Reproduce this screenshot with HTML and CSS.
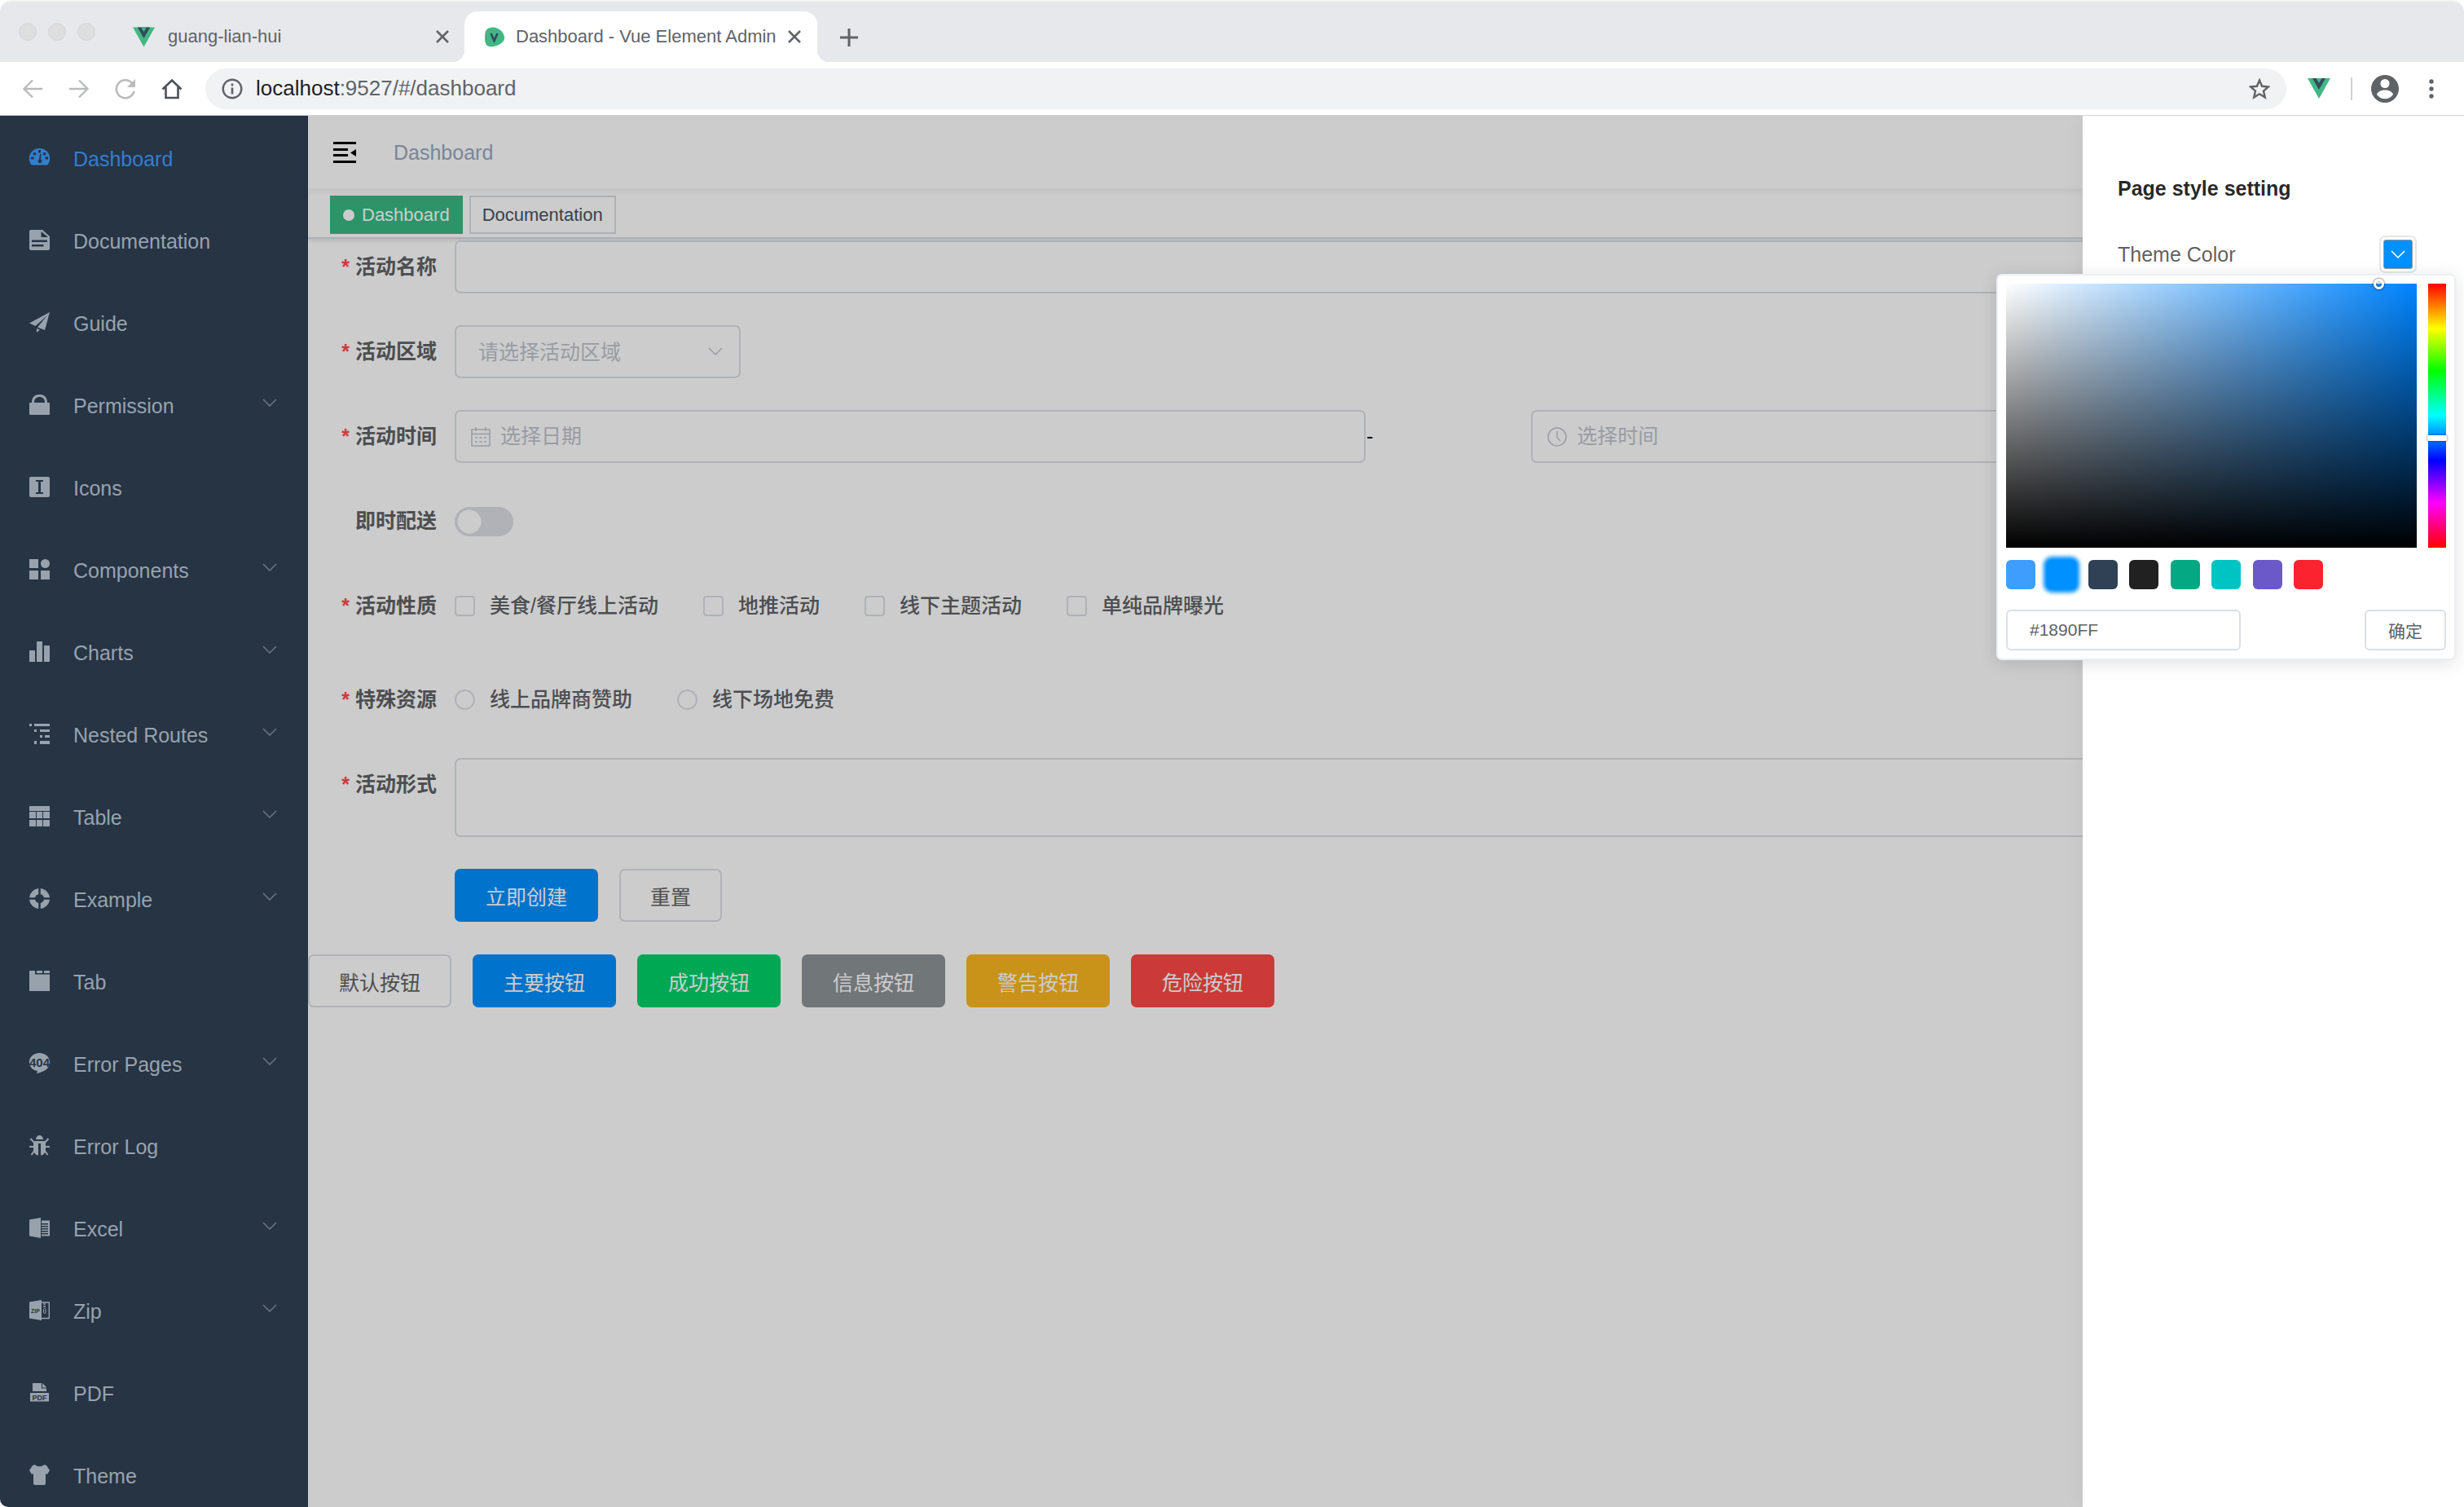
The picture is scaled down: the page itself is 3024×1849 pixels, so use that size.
FILE: index.html
```html
<!DOCTYPE html>
<html lang="zh-CN">
<head>
    <meta charset="UTF-8">
    <meta name="viewport" content="width=device-width, initial-scale=1.0">
    <title>Dashboard - Vue Element Admin</title>
    <link rel="stylesheet" href="styles.css">
</head>
<body>
    <svg class="sprite" aria-hidden="true">
        <symbol id="arrow-down" viewBox="0 0 18 10"><path d="M1 1l8 8 8-8" fill="none" stroke="currentColor" stroke-width="1.5"/></symbol>
        <symbol id="vue" viewBox="0 0 28 25"><path d="M0 0h28L14 25z" fill="#41b883"/><path d="M6 0h16l-8 14z" fill="#34495e"/><path d="M10.500 0h7L14 6z" fill="#41b883"/></symbol>
        <symbol id="close" viewBox="0 0 16 16"><path d="M1 1l14 14M15 1L1 15" fill="none" stroke="currentColor" stroke-width="2.500"/></symbol>
    </svg>

    <!-- browser bar -->
    <header class="browser">
        <div class="tab-strip">
            <div class="lights"><i></i><i></i><i></i></div>
            <div class="tab">
                <svg class="tab-icon"><use href="#vue"/></svg>
                <span class="tab-title">guang-lian-hui</span>
                <button class="tab-close" aria-label="Close tab"><svg><use href="#close"/></svg></button>
            </div>
            <div class="tab active">
                <svg class="tab-icon" viewBox="0 0 24 25"><path d="M7 1c7-2 16 4 17 11S17 23 11 24 0 24 0 14 2 2 7 1z" fill="#41b883"/><path d="M7.500 8l4 9 4-9" fill="none" stroke="#34495e" stroke-width="2.600"/></svg>
                <span class="tab-title">Dashboard - Vue Element Admin</span>
                <button class="tab-close" aria-label="Close tab"><svg><use href="#close"/></svg></button>
            </div>
            <button class="new-tab" aria-label="New tab"><svg viewBox="0 0 22 22"><path d="M11 0v22M0 11h22" stroke="currentColor" stroke-width="3"/></svg></button>
        </div>
        <div class="toolbar">
            <div class="nav-buttons">
                <button class="off" aria-label="Back"><svg viewBox="0 0 26 26"><path d="M25 13H3M13 2.500L2.500 13 13 23.500" fill="none" stroke="currentColor" stroke-width="2.400"/></svg></button>
                <button class="off" aria-label="Forward"><svg viewBox="0 0 26 26"><path d="M1 13h22M13 2.500L23.500 13 13 23.500" fill="none" stroke="currentColor" stroke-width="2.400"/></svg></button>
                <button class="off" aria-label="Reload"><svg viewBox="0 0 26 26"><path d="M21.500 6.500A11 11 0 1 0 23.500 16" fill="none" stroke="currentColor" stroke-width="2.600"/><path d="M25 1v10H15z" fill="currentColor"/></svg></button>
                <button aria-label="Home"><svg viewBox="0 0 26 26"><path d="M1.500 13.500L13 2.500l11.500 11M5.500 11v13h15V11" fill="none" stroke="currentColor" stroke-width="2.600"/></svg></button>
            </div>
            <div class="omnibox">
                <svg viewBox="0 0 26 26"><circle cx="13" cy="13" r="11.300" fill="none" stroke="#5f6368" stroke-width="2.400"/><path d="M13 11.500v8M13 6.500v3" stroke="#5f6368" stroke-width="2.600"/></svg>
                <span class="url"><b>localhost</b>:9527/#/dashboard</span>
                <button aria-label="Bookmark"><svg viewBox="0 0 26 26"><path d="M13 2.500l3.100 7.300 7.900.700-6 5.200 1.800 7.700-6.800-4.100-6.800 4.100L8 15.700l-6-5.200 7.900-.700z" fill="none" stroke="currentColor" stroke-width="2.400"/></svg></button>
            </div>
            <div class="extensions">
                <svg class="ext-vue"><use href="#vue"/></svg>
                <span class="divider"></span>
                <button class="account" aria-label="Account"><svg viewBox="0 0 34 34"><circle cx="17" cy="17" r="17" fill="#5f6368"/><circle cx="17" cy="10.500" r="5.500" fill="#fff"/><path d="M7 24c1-4 6-5.500 10-5.500S26 20 27 24c-2.500 3.500-6 5.200-10 5.200S9.500 27.500 7 24z" fill="#fff"/></svg></button>
                <button class="more" aria-label="Menu"><svg viewBox="0 0 6 24"><circle cx="3" cy="3" r="2.700"/><circle cx="3" cy="12" r="2.700"/><circle cx="3" cy="21" r="2.700"/></svg></button>
            </div>
        </div>
    </header>

    <div class="app">
        <nav class="sidebar">
            <a class="active" href="#dashboard"><svg viewBox="0 0 25 25"><path fill-rule="evenodd" d="M12.500 1A12.500 12.500 0 0 0 2 20.500q.6.900 1.500.900h18q.9 0 1.500-.900A12.500 12.500 0 0 0 12.500 1zM11 3h3v3.500h-3zM4.800 6.200h3.400v3H4.800zM16.800 6.200h3.400v3h-3.400zM2 11.500h3.500v3H2zM19.500 11.500H23v3h-3.500zM13 8h1.500l-.500 6.500a2.500 2.500 0 1 1-2 0z"/></svg><span>Dashboard</span></a>
            <a href="#documentation"><svg viewBox="0 0 25 25"><path fill-rule="evenodd" d="M2 0h14l9 8v15q0 2-2 2H2q-2 0-2-2V2q0-2 2-2zM14.500 2v7H23zM3 12.500v2.500h19v-2.500zM3 18v2.500h14.500V18z"/></svg><span>Documentation</span></a>
            <a href="#guide"><svg viewBox="0 0 25 25"><path d="M25 0L19 22l-9-3.500L22 4 7.500 17 0 13.500zM9 20l4 1.500-4 3.500z"/></svg><span>Guide</span></a>
            <a href="#permission"><svg viewBox="0 0 25 25"><path d="M1 10h2C3 3 7 0 12.500 0S22 3 22 10h2q1 0 1 1v13q0 1-1 1H1q-1 0-1-1V11q0-1 1-1zm5 0h13c0-5-3-7-6.500-7S6 5 6 10z"/></svg><span>Permission</span><svg class="arrow"><use href="#arrow-down"/></svg></a>
            <a href="#icons"><svg viewBox="0 0 25 25"><path fill-rule="evenodd" d="M2 0h21q2 0 2 2v21q0 2-2 2H2q-2 0-2-2V2q0-2 2-2zM8 4v2h3v13H8v2h9v-2h-3V6h3V4z"/></svg><span>Icons</span></a>
            <a href="#components"><svg viewBox="0 0 25 25"><path d="M0 0h11v11H0zM0 14h11v11H0zM14 14h11v11H14z"/><circle cx="19.500" cy="5.500" r="5.500"/></svg><span>Components</span><svg class="arrow"><use href="#arrow-down"/></svg></a>
            <a href="#charts"><svg viewBox="0 0 25 25"><path d="M0 11h7v14H0zM9 0h7v25H9zM18 5h7v20h-7z"/></svg><span>Charts</span><svg class="arrow"><use href="#arrow-down"/></svg></a>
            <a href="#nested"><svg viewBox="0 0 25 25"><path d="M0 0h3v3H0zM6 0h19v3H6zM6 7h3v3H6zM13 7h12v3H13zM13 14h3v3h-3zM19 14h6v3h-6zM6 21h3v4H6zM13 21h12v4H13z"/></svg><span>Nested Routes</span><svg class="arrow"><use href="#arrow-down"/></svg></a>
            <a href="#table"><svg viewBox="0 0 25 25"><path d="M0 0h25v6H0zM0 7h8v8H0zM9 7h7v8H9zM17 7h8v8h-8zM0 17h8v8H0zM9 17h7v8H9zM17 17h8v8h-8z"/></svg><span>Table</span><svg class="arrow"><use href="#arrow-down"/></svg></a>
            <a href="#example"><svg viewBox="0 0 25 25"><circle cx="12.500" cy="12.500" r="9" fill="none" stroke="currentColor" stroke-width="7"/><path d="M12.500 0v7.500M12.500 17.500V25M0 12.500h7.500M17.500 12.500H25" stroke="#304156" stroke-width="2.500"/></svg><span>Example</span><svg class="arrow"><use href="#arrow-down"/></svg></a>
            <a href="#tab"><svg viewBox="0 0 25 25"><path d="M0 0h7v4.500h18V25H0zM9 0h7v3H9zM18 0h7v3h-7z"/></svg><span>Tab</span></a>
            <a href="#error"><svg viewBox="0 0 25 25"><path d="M12.500 0C20 0 25 5 25 11c0 8-6 12-16 14l1-3C4 21 0 17 0 11 0 5 5 0 12.500 0z"/><text class="icon-text" x="12.500" y="16.500" font-size="15" text-anchor="middle">404</text></svg><span>Error Pages</span><svg class="arrow"><use href="#arrow-down"/></svg></a>
            <a href="#log"><svg viewBox="0 0 25 25"><path d="M8 5c0-3 2-5 4.500-5S17 2 17 5zM5 7h15v10c0 4-2 7-6 7.500V10h-3v14.500c-4-.500-6-3.500-6-7.500z"/><path d="M1.500 4L6 9M23.500 4L19 9M0 14h6M19 14h6M2.500 24L6 19M22.500 24L19 19" stroke="currentColor" stroke-width="2"/></svg><span>Error Log</span></a>
            <a href="#excel"><svg viewBox="0 0 25 25"><path fill-rule="evenodd" d="M0 2.500L14 0v25L0 22.500zM15 3.500h10v19H15v-2h8v-1.500h-8v-1.500h8V16h-8v-1.500h8V13h-8v-1.500h8V10h-8V8.500h8V7h-8z"/></svg><span>Excel</span><svg class="arrow"><use href="#arrow-down"/></svg></a>
            <a href="#zip"><svg viewBox="0 0 25 25"><path d="M0 2.500L15 0v25L0 22.500z"/><path d="M15 3h9.300v19.500H15" fill="none" stroke="currentColor" stroke-width="1.400"/><path d="M17 5h3M17 8h3" stroke="currentColor" stroke-width="1.500"/><rect x="17.500" y="10.500" width="2.500" height="6" rx="1" fill="none" stroke="currentColor"/><text class="icon-text" x="7.500" y="15.500" font-size="7" text-anchor="middle">ZIP</text></svg><span>Zip</span><svg class="arrow"><use href="#arrow-down"/></svg></a>
            <a href="#pdf"><svg viewBox="0 0 25 25"><path d="M4 1h12l5 5v5H4zM1 13h23v10.500H1z"/><path d="M15.500 1v6H21" fill="none" stroke="#304156" stroke-width="1.200"/><text class="icon-text" x="12.500" y="21.500" font-size="9" text-anchor="middle">PDF</text></svg><span>PDF</span></a>
            <a href="#theme"><svg viewBox="0 0 25 25"><path d="M7 0c2 3 9 3 11 0l3 1 4 6-3 5-2-1v12q0 2-2 2H7q-2 0-2-2V11l-2 1-3-5 4-6z"/></svg><span>Theme</span></a>
        </nav>

        <main class="main">
            <div class="navbar">
                <button class="hamburger" aria-label="Toggle sidebar"><svg viewBox="0 0 28 26"><path d="M0 0h28v3H0zM0 8h18v3H0zM0 15h18v3H0zM0 23h28v3H0zM28 9v9l-7-4.500z"/></svg></button>
                <span class="breadcrumb">Dashboard</span>
            </div>
            <div class="tags">
                <a class="tag active" href="#dashboard">Dashboard</a>
                <a class="tag" href="#documentation">Documentation</a>
            </div>

            <form class="form">
                <div class="row">
                    <label class="label required" for="name">活动名称</label>
                    <input class="input" id="name" type="text">
                </div>
                <div class="row">
                    <label class="label required" for="region">活动区域</label>
                    <div class="select">
                        <select id="region">
                            <option>请选择活动区域</option>
                        </select>
                        <svg><use href="#arrow-down"/></svg>
                    </div>
                </div>
                <div class="row">
                    <label class="label required" for="date">活动时间</label>
                    <div class="time-cols">
                        <div class="picker">
                            <svg viewBox="0 0 24 24"><path d="M1 3h22v20H1zM1 8.500h22M6 0v5M18 0v5M5 13h3m2.500 0h3m2.500 0h3M5 18h3m2.500 0h3m2.500 0h3" fill="none" stroke="currentColor" stroke-width="1.500"/></svg>
                            <input id="date" type="text" placeholder="选择日期">
                        </div>
                        <span class="dash">-</span>
                        <div class="picker">
                            <svg viewBox="0 0 24 24"><circle cx="12" cy="12" r="11" fill="none" stroke="currentColor" stroke-width="1.500"/><path d="M12 5v8l4 4" fill="none" stroke="currentColor" stroke-width="1.500"/></svg>
                            <input type="text" placeholder="选择时间" aria-label="选择时间">
                        </div>
                    </div>
                </div>
                <div class="row">
                    <label class="label" for="delivery">即时配送</label>
                    <input class="switch" id="delivery" type="checkbox">
                </div>
                <div class="row checks">
                    <span class="label required">活动性质</span>
                    <div class="options">
                        <label><input type="checkbox">美食/餐厅线上活动</label>
                        <label><input type="checkbox">地推活动</label>
                        <label><input type="checkbox">线下主题活动</label>
                        <label><input type="checkbox">单纯品牌曝光</label>
                    </div>
                </div>
                <div class="row">
                    <span class="label required">特殊资源</span>
                    <div class="options">
                        <label><input type="radio" name="resource">线上品牌商赞助</label>
                        <label><input type="radio" name="resource">线下场地免费</label>
                    </div>
                </div>
                <div class="row">
                    <label class="label required" for="desc">活动形式</label>
                    <textarea class="input" id="desc"></textarea>
                </div>
                <div class="row actions">
                    <button class="btn primary" type="button">立即创建</button>
                    <button class="btn" type="button">重置</button>
                </div>
            </form>

            <div class="buttons">
                <button class="btn">默认按钮</button>
                <button class="btn primary">主要按钮</button>
                <button class="btn success">成功按钮</button>
                <button class="btn info">信息按钮</button>
                <button class="btn warning">警告按钮</button>
                <button class="btn danger">危险按钮</button>
            </div>
        </main>

        <div class="mask"></div>

        <aside class="drawer">
            <h3>Page style setting</h3>
            <div class="drawer-item">
                <span>Theme Color</span>
                <button class="color-trigger" aria-label="Theme Color"><span><svg><use href="#arrow-down"/></svg></span></button>
            </div>
            <div class="color-dropdown">
                <div class="color-main">
                    <div class="sv-panel"><i></i></div>
                    <input class="hue" type="range" min="0" max="360" value="211" aria-label="Hue">
                </div>
                <div class="swatches">
                    <button style="background: #3e9efe" aria-label="#409EFF"></button>
                    <button class="selected" style="background: #0090ff" aria-label="#1890FF"></button>
                    <button style="background: #304156" aria-label="#304156"></button>
                    <button style="background: #212121" aria-label="#212121"></button>
                    <button style="background: #04a984" aria-label="#11A983"></button>
                    <button style="background: #00c4c3" aria-label="#13C2C2"></button>
                    <button style="background: #6b59c9" aria-label="#6959CD"></button>
                    <button style="background: #fb2330" aria-label="#F5222D"></button>
                </div>
                <div class="color-footer">
                    <input type="text" value="#1890FF" aria-label="Color value">
                    <button>确定</button>
                </div>
            </div>
        </aside>
    </div>
</body>
</html>
```

FILE: styles.css
```css
* {
    box-sizing: border-box;
}
body {
    display: flex;
    flex-direction: column;
    height: 100vh;
    margin: 0;
    overflow: hidden;
    background: white;
    color: #606266;
    font-family: "Liberation Sans", "Noto Sans CJK SC", Arial, sans-serif;
    font-size: 25px;
}
button, input, select, textarea {
    margin: 0;
    font-family: inherit;
    font-size: inherit;
    color: inherit;
}
button {
    padding: 0;
    border: none;
    background: none;
    cursor: pointer;
}
svg {
    display: block;
    flex-shrink: 0;
    fill: currentColor;
}
a {
    color: inherit;
    text-decoration: none;
}
.sprite {
    position: absolute;
    width: 0;
    height: 0;
}

/* browser bar */
.tab-strip {
    display: flex;
    align-items: center;
    height: 76px;
    padding-left: 23px;
    border-top: 2px solid #f3f4f5;
    border-radius: 14px 14px 0 0;
    background: #e7e8eb;
    color: #5f6368;
}
.lights {
    display: flex;
    gap: 14px;
    margin-right: 20px;
}
.lights i {
    width: 22px;
    height: 22px;
    border: 1px solid #d5d6d6;
    border-radius: 50%;
    background: #dddedd;
}
.tab {
    position: relative;
    display: flex;
    align-items: center;
    align-self: flex-end;
    gap: 16px;
    width: 433px;
    height: 62px;
    padding: 0 19px 0 26px;
    font-size: 22px;
}
.tab.active {
    gap: 14px;
    padding: 0 22px 0 25px;
    border-radius: 16px 16px 0 0;
    background: white;
}
.tab.active::before, .tab.active::after {
    content: "";
    position: absolute;
    bottom: 0;
    width: 14px;
    height: 14px;
}
.tab.active::before {
    left: -14px;
    background: radial-gradient(circle at 0 0, transparent 14px, white 14px);
}
.tab.active::after {
    right: -14px;
    background: radial-gradient(circle at 100% 0, transparent 14px, white 14px);
}
.tab-icon {
    width: 27px;
    height: 25px;
}
.tab.active .tab-icon {
    width: 24px;
}
.tab-title {
    flex: 1;
    white-space: nowrap;
}
.tab-close svg {
    width: 16px;
    height: 16px;
}
.new-tab {
    margin: 14px 0 0 28px;
    color: #5f6368;
}
.new-tab svg {
    width: 22px;
    height: 22px;
}
.toolbar {
    display: flex;
    align-items: center;
    height: 66px;
    padding: 0 37px 0 27px;
    border-bottom: 1px solid #d3d4d6;
}
.nav-buttons {
    display: flex;
    gap: 31px;
    margin-right: 28px;
    color: #4d5156;
}
.nav-buttons .off {
    color: #b9bbbd;
}
.nav-buttons svg, .omnibox svg {
    width: 26px;
    height: 26px;
}
.omnibox {
    display: flex;
    flex: 1;
    align-items: center;
    gap: 16px;
    height: 50px;
    padding: 0 20px;
    border-radius: 25px;
    background: #f1f2f4;
    color: #5f6368;
    font-size: 26px;
}
.url {
    flex: 1;
}
.url b {
    color: #202124;
    font-weight: normal;
}
.extensions {
    display: flex;
    align-items: center;
    margin-left: 26px;
}
.ext-vue {
    width: 28px;
    height: 25px;
}
.divider {
    width: 2px;
    height: 28px;
    margin: 0 23px 0 25px;
    background: #cfd1d4;
}
.account svg {
    width: 34px;
    height: 34px;
}
.more {
    margin-left: 37px;
    color: #5f6368;
}
.more svg {
    width: 6px;
    height: 24px;
}

/* app */
.app {
    position: relative;
    display: flex;
    flex: 1;
    min-height: 0;
    overflow: hidden;
    border-bottom-left-radius: 10px;
}
.sidebar {
    flex-shrink: 0;
    width: 378px;
    padding-top: 3px;
    overflow: hidden;
    background: #304156;
    color: #bfcbd9;
}
.sidebar a {
    display: flex;
    align-items: center;
    gap: 29px;
    height: 101px;
    padding: 0 38px 0 36px;
}
.sidebar a.active {
    color: #409eff;
}
.sidebar a > svg {
    width: 25px;
    height: 25px;
    margin-bottom: 4px;
}
.sidebar a > .arrow {
    width: 18px;
    height: 10px;
    margin-bottom: 10px;
    margin-left: auto;
    opacity: 0.6;
}
.icon-text {
    fill: #304156;
    font-family: "Liberation Sans", Arial, sans-serif;
    font-weight: bold;
}
.main {
    flex: 1;
    min-width: 0;
    background: white;
}
.navbar {
    display: flex;
    align-items: center;
    height: 90px;
    padding-left: 31px;
    box-shadow: 0 2px 7px rgba(0, 21, 41, 0.08);
}
.hamburger svg {
    width: 28px;
    height: 26px;
    fill: black;
}
.breadcrumb {
    margin-left: 46px;
    color: #97a8be;
}
.tags {
    display: flex;
    align-items: center;
    gap: 8px;
    height: 61px;
    padding: 4px 0 0 27px;
    border-bottom: 2px solid #d8dce5;
    box-shadow: 0 2px 5px rgba(0, 0, 0, 0.12);
}
.tag {
    display: flex;
    align-items: center;
    height: 47px;
    padding: 0 14px;
    border: 2px solid #d8dce5;
    color: #495060;
    font-size: 22px;
}
.tag.active {
    border-color: #37ba83;
    background: #37ba83;
    color: white;
}
.tag.active::before {
    content: "";
    width: 14px;
    height: 14px;
    margin-right: 9px;
    border-radius: 50%;
    background: white;
}

/* form */
.form {
    padding: 2px 27px 0 0;
}
.row {
    display: flex;
    min-height: 65px;
    margin-bottom: 39px;
}
.row.checks {
    margin-bottom: 50px;
}
.row.actions {
    gap: 26px;
    margin-bottom: 40px;
    padding-left: 180px;
}
.label {
    flex-shrink: 0;
    width: 180px;
    padding-right: 22px;
    color: #606266;
    font-weight: bold;
    line-height: 65px;
    text-align: right;
}
.label.required::before {
    content: "*";
    margin-right: 7px;
    color: #ff4949;
}
.input {
    flex: 1;
    height: 65px;
    padding: 0 27px;
    border: 2px solid #dcdfe6;
    border-radius: 7px;
    background: white;
}
textarea.input {
    height: 97px;
    padding: 9px 27px;
    resize: none;
}
.select {
    position: relative;
    width: 351px;
}
.select select {
    width: 100%;
    height: 65px;
    padding: 0 27px;
    border: 2px solid #dcdfe6;
    border-radius: 7px;
    background: white;
    color: #c0c4cc;
    appearance: none;
}
.select svg {
    position: absolute;
    top: 27px;
    right: 22px;
    width: 18px;
    height: 10px;
    color: #c0c4cc;
}
.time-cols {
    display: grid;
    flex: 1;
    grid-template-columns: 11fr 2fr 11fr;
}
.picker {
    display: flex;
    align-items: center;
    gap: 12px;
    height: 65px;
    padding: 0 18px;
    border: 2px solid #dcdfe6;
    border-radius: 7px;
    color: #c0c4cc;
}
.picker svg {
    width: 24px;
    height: 24px;
}
.picker input {
    flex: 1;
    padding: 0;
    border: none;
    background: none;
    color: #606266;
}
.picker input::placeholder {
    color: #c0c4cc;
}
.dash {
    padding-left: 1px;
    color: black;
    line-height: 65px;
}
.switch {
    width: 72px;
    height: 36px;
    margin-top: 15px;
    border-radius: 18px;
    background: radial-gradient(circle at 18px 18px, white 14px, transparent 15px) #dcdfe6;
    appearance: none;
}
.options {
    display: flex;
    align-items: center;
    gap: 55px;
    height: 65px;
}
.options label {
    display: flex;
    align-items: center;
    gap: 18px;
    font-weight: 500;
    line-height: 65px;
}
.options input {
    width: 25px;
    height: 25px;
    border: 2px solid #dcdfe6;
    border-radius: 4px;
    background: white;
    appearance: none;
}
.options input[type="radio"] {
    border-radius: 50%;
}
.btn {
    height: 65px;
    padding: 0 36px;
    border: 2px solid #dcdfe6;
    border-radius: 7px;
    background: white;
    color: #606266;
}
.btn.primary, .btn.success, .btn.info, .btn.warning, .btn.danger {
    border-color: transparent;
    color: white;
}
.btn.primary {
    background-color: #0090ff;
}
.btn.success {
    background-color: #00d26a;
}
.btn.info {
    background-color: #8e9498;
}
.btn.warning {
    background-color: #fab81f;
}
.btn.danger {
    background-color: #fe4946;
}
.buttons {
    display: flex;
    gap: 26px;
}

/* settings drawer */
.mask {
    position: absolute;
    inset: 0;
    background: rgba(0, 0, 0, 0.2);
}
.drawer {
    position: absolute;
    top: 0;
    right: 0;
    bottom: 0;
    width: 468px;
    padding: 70px 58px 0 43px;
    background: white;
    box-shadow: 0 0 27px rgba(0, 0, 0, 0.05);
}
.drawer h3 {
    margin: 0;
    color: rgba(0, 0, 0, 0.85);
    font-size: 25px;
    line-height: 38px;
}
.drawer-item {
    display: flex;
    align-items: center;
    justify-content: space-between;
    margin-top: 39px;
    color: rgba(0, 0, 0, 0.65);
}
.color-trigger {
    width: 46px;
    height: 46px;
    padding: 3px;
    border: 2px solid #e6e6e6;
    border-radius: 7px;
}
.color-trigger span {
    display: flex;
    align-items: center;
    justify-content: center;
    height: 100%;
    border: 1px solid #999;
    border-radius: 3px;
    background: #0090ff;
    color: white;
}
.color-trigger svg {
    width: 18px;
    height: 10px;
}
.color-dropdown {
    position: absolute;
    top: 194px;
    right: 10px;
    width: 564px;
    padding: 10px;
    border: 2px solid #ebeef5;
    border-radius: 7px;
    background: white;
    box-shadow: 0 4px 22px rgba(0, 0, 0, 0.12);
}
.color-main {
    display: flex;
    justify-content: space-between;
    height: 324px;
}
.sv-panel {
    position: relative;
    width: 504px;
    background: linear-gradient(to top, #000, rgba(0, 0, 0, 0)), linear-gradient(to right, #fff, rgba(255, 255, 255, 0)) #0084ff;
}
.sv-panel i {
    position: absolute;
    top: -6px;
    left: 451px;
    width: 13px;
    height: 13px;
    border: 3px solid white;
    border-radius: 50%;
    box-shadow: 0 0 2px 1px rgba(0, 0, 0, 0.4), inset 0 0 2px 1px rgba(0, 0, 0, 0.3);
}
.hue {
    width: 22px;
    height: 324px;
    background: linear-gradient(to bottom, #f00 0%, #ff0 17%, #0f0 33%, #0ff 50%, #00f 67%, #f0f 83%, #f00 100%);
    appearance: none;
    writing-mode: vertical-lr;
}
.hue::-webkit-slider-thumb {
    width: 24px;
    height: 7px;
    border-radius: 2px;
    background: white;
    box-shadow: 0 0 3px rgba(0, 0, 0, 0.6);
    appearance: none;
}
.swatches {
    display: flex;
    justify-content: space-between;
    width: 389px;
    margin-top: 15px;
}
.swatches button {
    width: 36px;
    height: 36px;
    border-radius: 6px;
}
.swatches .selected {
    box-shadow: 0 0 5px 4px #0090ff;
}
.color-footer {
    display: flex;
    justify-content: space-between;
    margin-top: 25px;
    font-size: 21px;
}
.color-footer input {
    width: 288px;
    height: 50px;
    padding: 0 27px;
    border: 2px solid #dcdfe6;
    border-radius: 6px;
}
.color-footer button {
    height: 50px;
    padding: 0 27px;
    border: 2px solid #dcdfe6;
    border-radius: 6px;
}
```
